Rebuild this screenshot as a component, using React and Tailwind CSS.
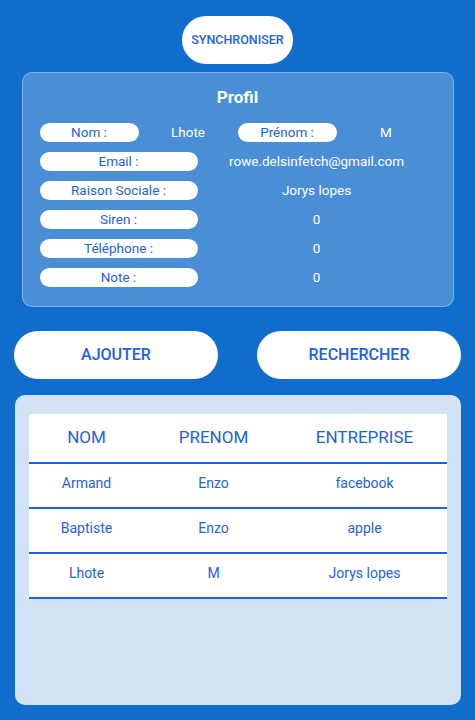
const profil = [
  { label: "Email :", value: "rowe.delsinfetch@gmail.com" },
  { label: "Raison Sociale :", value: "Jorys lopes" },
  { label: "Siren :", value: "0" },
  { label: "Téléphone :", value: "0" },
  { label: "Note :", value: "0" },
];

const contacts = [
  { nom: "Armand", prenom: "Enzo", entreprise: "facebook" },
  { nom: "Baptiste", prenom: "Enzo", entreprise: "apple" },
  { nom: "Lhote", prenom: "M", entreprise: "Jorys lopes" },
];

const Pill = ({ children, className = "" }) => (
  <div className={`h-[19px] rounded-full bg-white flex items-center justify-center text-[13.5px] leading-[19px] text-[#1f62e0] ${className}`}>
    {children}
  </div>
);

export default function App() {
  return (
    <div className="w-[475px] h-[720px] bg-[#116dcb] overflow-hidden font-['Roboto',sans-serif] flex flex-col items-center">
      <button className="mt-4 h-12 w-[111px] rounded-full bg-white text-[12.5px] font-medium text-[#1f62e0]">
        SYNCHRONISER
      </button>

      <div className="mt-2 w-[432px] h-[235px] rounded-[10px] border border-white/30 bg-[#4b8ed8] px-[17px]">
        <h2 className="mt-[14px] h-5 text-center text-[17px] font-bold leading-5 text-white">Profil</h2>
        <div className="mt-[16px] flex flex-col gap-[10px]">
          <div className="grid grid-cols-4 items-center h-[19px] text-[13.5px] leading-[19px] text-white">
            <Pill>Nom :</Pill>
            <span className="text-center">Lhote</span>
            <Pill>Prénom :</Pill>
            <span className="text-center">M</span>
          </div>
          {profil.map((row) => (
            <div key={row.label} className="flex items-center h-[19px] text-[13.5px] leading-[19px] text-white">
              <Pill className="w-[158px]">{row.label}</Pill>
              <span className="flex-1 text-center">{row.value}</span>
            </div>
          ))}
        </div>
      </div>

      <div className="mt-6 w-full px-[14px] flex justify-between">
        <button className="h-12 w-[204px] rounded-full bg-white text-[16px] font-medium text-[#1f62e0]">AJOUTER</button>
        <button className="h-12 w-[204px] rounded-full bg-white text-[16px] font-medium text-[#1f62e0]">RECHERCHER</button>
      </div>

      <div className="mt-4 w-[446px] h-[310px] rounded-[10px] bg-[#d2e3f5] pt-[19px] px-[14px]">
        <div className="bg-white text-[#1f62e0]">
          <div className="grid grid-cols-[116px_138px_1fr] h-[50px] items-center border-b-2 border-[#1a5fe6] text-[17px]">
            <span className="text-center">NOM</span>
            <span className="text-center">PRENOM</span>
            <span className="text-center">ENTREPRISE</span>
          </div>
          {contacts.map((c, i) => (
            <div key={i} className="grid grid-cols-[116px_138px_1fr] h-[45px] pb-[4px] items-center border-b-2 border-[#1a5fe6] text-[14px]">
              <span className="text-center">{c.nom}</span>
              <span className="text-center">{c.prenom}</span>
              <span className="text-center">{c.entreprise}</span>
            </div>
          ))}
        </div>
      </div>
    </div>
  );
}
